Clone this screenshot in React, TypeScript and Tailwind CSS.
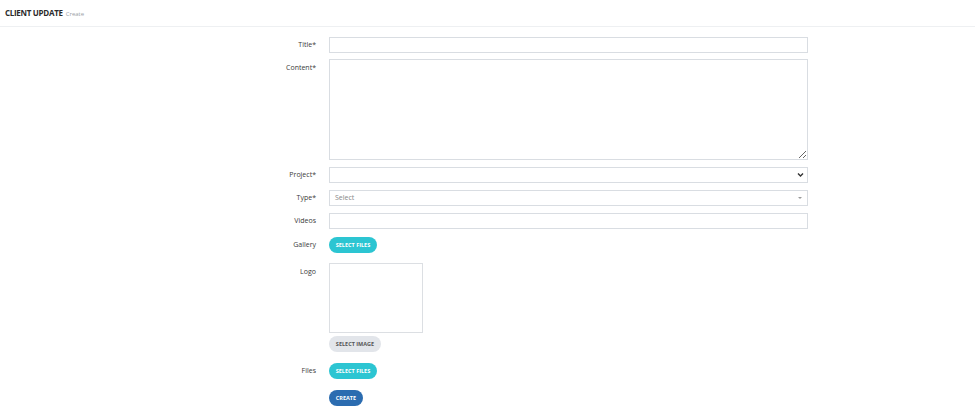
import React from "react";

function Row({ label, top, children }: { label: string; top?: boolean; children: React.ReactNode }) {
  return (
    <div className={`flex ${top ? "items-start" : "items-center"}`}>
      <label className={`w-[316px] shrink-0 text-right text-[7px] leading-[10px] text-[#3a3a3a] ${top ? "pt-[4px]" : ""}`}>{label}</label>
      <div className="ml-[13px] w-[479px] flex flex-col items-start">{children}</div>
    </div>
  );
}

const inputCls = "block w-full h-[16px] border border-[#d9dde2] bg-white text-[7px] outline-none";

export default function App() {
  return (
    <div className="w-[975px] h-[419px] bg-white text-[#333]" style={{ fontFamily: "'Open Sans', sans-serif" }}>
      <div className="flex items-baseline gap-[3px] px-[5px] pt-[7px] h-[27px] border-b border-[#eef0f2]">
        <span className="text-[8px] font-bold tracking-[-0.3px] text-[#2b2b2b]">CLIENT UPDATE</span>
        <span className="text-[6px] text-[#9aa0a6]">Create</span>
      </div>

      <div className="flex flex-col pt-[10px]">
        <Row label="Title*">
          <input className={inputCls} />
        </Row>
        <div className="h-[6px]" />
        <Row label="Content*" top>
          <textarea className="block w-full h-[101px] border border-[#d9dde2] bg-white text-[7px] outline-none" />
        </Row>
        <div className="h-[7px]" />
        <Row label="Project*">
          <div className="relative w-full h-[16px] border border-[#d9dde2]">
            <svg className="absolute right-[3px] top-[4px]" width="7" height="6" viewBox="0 0 7 6">
              <path d="M1 1.5 L3.5 4 L6 1.5" stroke="#333" strokeWidth="1.4" fill="none" />
            </svg>
          </div>
        </Row>
        <div className="h-[7px]" />
        <Row label="Type*">
          <div className="relative flex items-center w-full h-[16px] border border-[#d9dde2] pl-[5px] text-[7px] text-[#888]">
            Select
            <span className="absolute right-[5px] top-[6px] w-0 h-0 border-l-[2px] border-r-[2px] border-t-[2px] border-l-transparent border-r-transparent border-t-[#999]" />
          </div>
        </Row>
        <div className="h-[7px]" />
        <Row label="Videos">
          <input className={inputCls} />
        </Row>
        <div className="h-[8px]" />
        <Row label="Gallery">
          <button className="h-[16px] w-[48px] rounded-full bg-[#2cc5d2] text-[5.5px] font-bold text-white">SELECT FILES</button>
        </Row>
        <div className="h-[10px]" />
        <Row label="Logo" top>
          <div className="w-[94px] h-[70px] border border-[#dcdfe3]" />
          <button className="mt-[3px] h-[16px] w-[52px] rounded-full bg-[#e2e5ea] text-[5.5px] font-bold text-[#555]">SELECT IMAGE</button>
        </Row>
        <div className="h-[11px]" />
        <Row label="Files">
          <button className="h-[16px] w-[48px] rounded-full bg-[#2cc5d2] text-[5.5px] font-bold text-white">SELECT FILES</button>
        </Row>
        <div className="h-[11px]" />
        <Row label="">
          <button className="h-[16px] w-[34px] rounded-full bg-[#2b6cb0] text-[5.5px] font-bold text-white">CREATE</button>
        </Row>
      </div>
    </div>
  );
}
